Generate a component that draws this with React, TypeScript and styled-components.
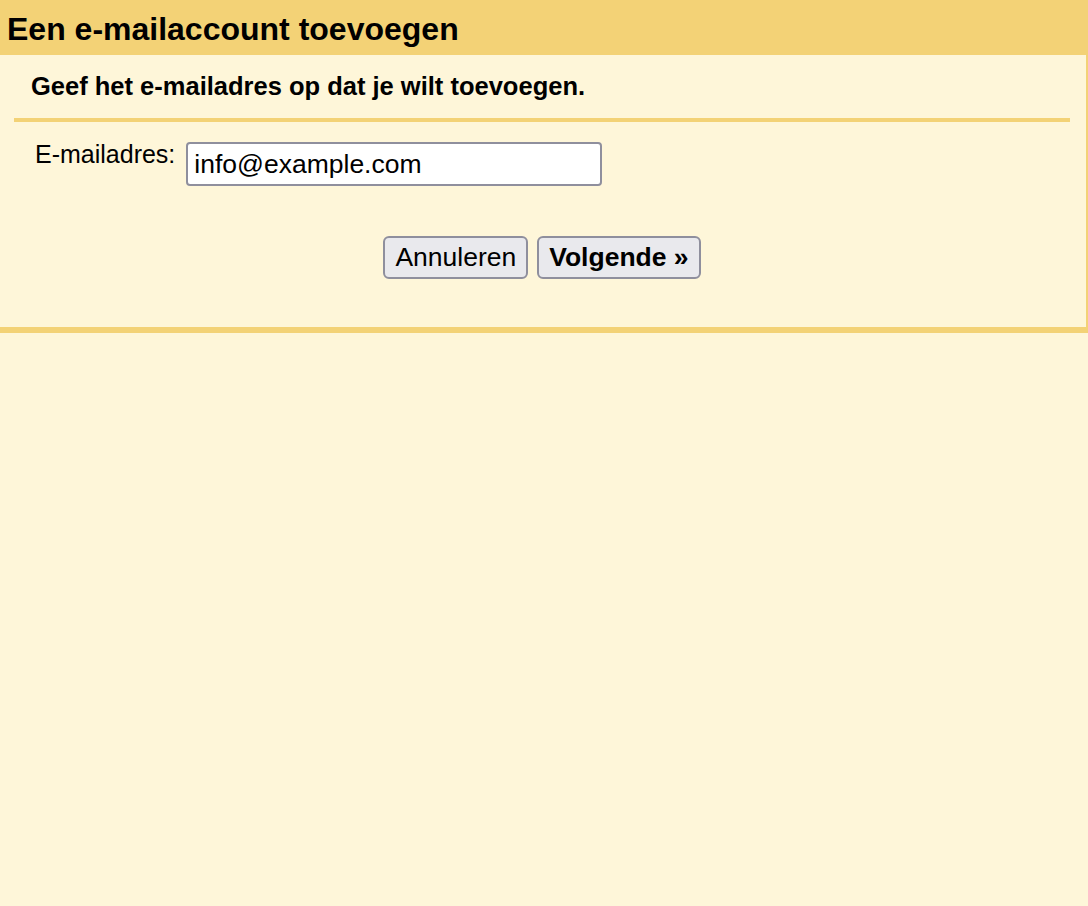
import React from "react";
import styled, { createGlobalStyle } from "styled-components";

const GlobalStyle = createGlobalStyle`
  html, body {
    margin: 0;
    padding: 0;
    background: #fef6d9;
  }
  body {
    font-family: "Liberation Sans", Arial, Helvetica, sans-serif;
    color: #000;
  }
  * { box-sizing: border-box; }
`;

const Panel = styled.div`
  width: 1088px;
  background: #fef6d9;
  border-right: 2px solid #f3d276;
  border-bottom: 6px solid #f3d276;
`;

const Header = styled.h1`
  margin: 0;
  height: 55px;
  padding: 11px 0 0 7px;
  background: #f3d276;
  font-size: 32px;
  line-height: 37px;
  font-weight: 700;
  white-space: nowrap;
`;

const Body = styled.div`
  padding: 0 16px 48px 14px;
`;

const Subtitle = styled.h2`
  margin: 0;
  padding: 17px 0 17px 17px;
  font-size: 25.5px;
  line-height: 29px;
  font-weight: 700;
  white-space: nowrap;
`;

const Divider = styled.div`
  height: 4px;
  background: #f3d276;
`;

const FieldRow = styled.div`
  display: flex;
  align-items: flex-start;
  gap: 11px;
  padding: 18px 0 0 21px;
`;

const Label = styled.label`
  font-size: 25px;
  line-height: 29px;
  white-space: nowrap;
`;

const TextInput = styled.input`
  margin-top: 2px;
  width: 416px;
  height: 44px;
  padding: 0 6px;
  border: 2px solid #8f8f9d;
  border-radius: 4px;
  background: #fff;
  font-family: "Liberation Sans", Arial, Helvetica, sans-serif;
  font-size: 26.5px;
  color: #000;
  outline: none;
`;

const ButtonRow = styled.div`
  display: flex;
  justify-content: center;
  gap: 9px;
  margin-top: 50px;
`;

const Button = styled.button<{ $primary?: boolean }>`
  height: 43px;
  padding: 0 10px;
  border: 2px solid #8f8f9d;
  border-radius: 6px;
  background: #e9e9ed;
  font-family: "Liberation Sans", Arial, Helvetica, sans-serif;
  font-size: 26.5px;
  font-weight: ${(p) => (p.$primary ? 700 : 400)};
  color: #000;
  white-space: nowrap;
  cursor: pointer;
`;

export default function App() {
  return (
    <>
      <GlobalStyle />
      <Panel>
        <Header>Een e-mailaccount toevoegen</Header>
        <Body>
          <Subtitle>Geef het e-mailadres op dat je wilt toevoegen.</Subtitle>
          <Divider />
          <FieldRow>
            <Label htmlFor="email">E-mailadres:</Label>
            <TextInput id="email" type="text" defaultValue="info@example.com" />
          </FieldRow>
          <ButtonRow>
            <Button type="button">Annuleren</Button>
            <Button type="button" $primary>
              Volgende »
            </Button>
          </ButtonRow>
        </Body>
      </Panel>
    </>
  );
}
